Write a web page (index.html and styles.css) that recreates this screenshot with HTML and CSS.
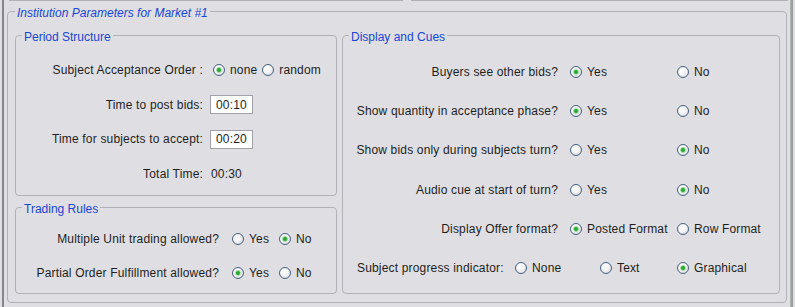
FILE: index.html
```html
<!DOCTYPE html>
<html lang="en">
  <head>
    <meta charset="UTF-8">
    <title>Institution Parameters</title>
    <link rel="stylesheet" href="styles.css">
  </head>
  <body>
    <div class="pane">
        <div class="tabline"></div>
        <fieldset class="outer">
            <legend>Institution Parameters for Market #1</legend>
            <div class="cols">
                <div class="left">
                    <fieldset class="box period">
                        <legend>Period Structure</legend>
                        <div class="grid period-grid">
                            <span class="lbl">Subject Acceptance Order :</span>
                            <div class="group">
                                <label class="opt"><span class="radio on"></span>none</label>
                                <label class="opt"><span class="radio"></span>random</label>
                            </div>

                            <span class="lbl">Time to post bids:</span>
                            <div><input class="time" type="text" value="00:10"></div>

                            <span class="lbl">Time for subjects to accept:</span>
                            <div><input class="time" type="text" value="00:20"></div>

                            <span class="lbl">Total Time:</span>
                            <span class="total">00:30</span>
                        </div>
                    </fieldset>

                    <fieldset class="box trading">
                        <legend>Trading Rules</legend>
                        <div class="grid trading-grid">
                            <span class="lbl">Multiple Unit trading allowed?</span>
                            <div class="group wide">
                                <label class="opt"><span class="radio"></span>Yes</label>
                                <label class="opt"><span class="radio on"></span>No</label>
                            </div>

                            <span class="lbl">Partial Order Fulfillment allowed?</span>
                            <div class="group wide">
                                <label class="opt"><span class="radio on"></span>Yes</label>
                                <label class="opt"><span class="radio"></span>No</label>
                            </div>
                        </div>
                    </fieldset>
                </div>

                <fieldset class="box cues">
                    <legend>Display and Cues</legend>
                    <div class="grid cues-grid">
                        <span class="lbl">Buyers see other bids?</span>
                        <label class="opt"><span class="radio on"></span>Yes</label>
                        <label class="opt"><span class="radio"></span>No</label>

                        <span class="lbl">Show quantity in acceptance phase?</span>
                        <label class="opt"><span class="radio on"></span>Yes</label>
                        <label class="opt"><span class="radio"></span>No</label>

                        <span class="lbl">Show bids only during subjects turn?</span>
                        <label class="opt"><span class="radio"></span>Yes</label>
                        <label class="opt"><span class="radio on"></span>No</label>

                        <span class="lbl">Audio cue at start of turn?</span>
                        <label class="opt"><span class="radio"></span>Yes</label>
                        <label class="opt"><span class="radio on"></span>No</label>

                        <span class="lbl">Display Offer format?</span>
                        <label class="opt"><span class="radio on"></span>Posted Format</label>
                        <label class="opt"><span class="radio"></span>Row Format</label>

                        <div class="progress">
                            <span class="plbl">Subject progress indicator:</span>
                            <label class="opt"><span class="radio"></span>None</label>
                            <label class="opt"><span class="radio"></span>Text</label>
                            <label class="opt"><span class="radio on"></span>Graphical</label>
                        </div>
                    </div>
                </fieldset>
            </div>
        </fieldset>
    </div>
  </body>
</html>
```

FILE: styles.css
```css
html, body {
    margin: 0;
    height: 307px;
    overflow: hidden;
}
body {
    background: #dfdee3;
    font: 12px "Liberation Sans", Arial, sans-serif;
    color: #1e1e1e;
}
.pane {
    margin-left: 2px;
    width: 789px;
    height: 307px;
    box-sizing: border-box;
    border-left: 2px solid #85858d;
    border-right: 1px solid #b3b1b8;
    box-shadow: 2px 0 0 #98a39c;
}
.tabline {
    height: 1px;
    margin-left: 5px;
    width: 779px;
    background: linear-gradient(to right, #b3b1b8 0 394px, transparent 394px 402px, #b3b1b8 402px);
}

/* titled borders */
fieldset {
    margin: 0;
    min-width: 0;
    border: 1px solid #b3b1b8;
    border-radius: 4px;
}
legend {
    padding: 4px 2px 0;
    line-height: 10px;
    color: #1747d4;
}
.outer {
    margin: 3px 0 0 3px;
    width: 780px;
    box-sizing: border-box;
    padding: 10px 6px 8px 7px;
}
.outer > legend {
    font-style: italic;
}
.cols {
    height: 266px;
    display: grid;
    grid-template-columns: 322px 438px;
    column-gap: 5px;
}
.left {
    display: flex;
    flex-direction: column;
    gap: 4px;
}
.box {
    padding: 0;
}
.box > legend {
    margin-left: 6px;
}
.period {
    padding: 18px 0 11px;
}
.trading {
    flex: 1;
    padding: 15px 0 0;
}
.cues {
    padding: 20px 0 0;
}

/* rows */
.grid {
    display: grid;
    grid-auto-rows: 20px;
    align-items: center;
}
.period-grid {
    grid-template-columns: 187px auto;
    column-gap: 7px;
    row-gap: 14.7px;
}
.trading-grid {
    grid-template-columns: 203px auto;
    column-gap: 10px;
    row-gap: 14px;
}
.cues-grid {
    grid-template-columns: 227px 107px auto;
    row-gap: 19.2px;
}
.lbl, .plbl {
    white-space: nowrap;
    letter-spacing: 0.17px;
}
.lbl {
    text-align: right;
}
.cues-grid .lbl {
    padding-right: 12px;
}
.group {
    display: flex;
    gap: 5px;
    padding-left: 3px;
}
.group.wide {
    gap: 10px;
}
.opt {
    display: inline-flex;
    align-items: center;
    gap: 5px;
    white-space: nowrap;
    line-height: 20px;
    letter-spacing: 0.15px;
}
.radio {
    width: 10px;
    height: 10px;
    border: 1px solid #45617f;
    border-radius: 50%;
    background: radial-gradient(circle at 38% 35%, #ffffff 0, #f4f4f6 45%, #cbccd5 100%);
    flex: none;
}
.radio.on {
    background:
        radial-gradient(circle, #2e9e36 0, #36b13f 1.6px, #a9dcaa 2.6px, transparent 3.2px),
        radial-gradient(circle at 38% 35%, #ffffff 0, #f4f4f6 45%, #cbccd5 100%);
}
.time {
    width: 43px;
    height: 19px;
    box-sizing: border-box;
    border: 1px solid #a2a1a9;
    background: #fff;
    padding: 0 0 0 5px;
    margin: 0;
    font: 12px "Liberation Sans", Arial, sans-serif;
    letter-spacing: 0.15px;
    color: #1e1e1e;
}
.total {
    padding-left: 1px;
    letter-spacing: 0.15px;
}
.progress {
    grid-column: 1 / -1;
    display: grid;
    grid-template-columns: 158px 85px 77px auto;
    align-items: center;
    padding-left: 14px;
    white-space: nowrap;
}
```
